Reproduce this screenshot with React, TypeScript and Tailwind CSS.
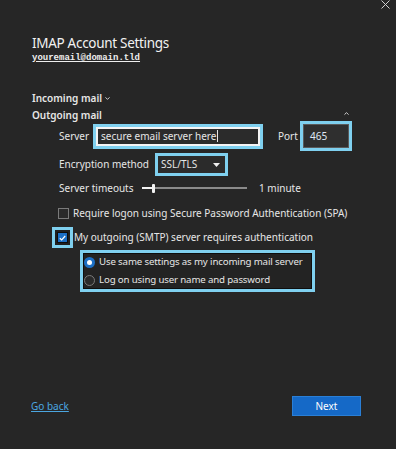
import { ChevronDown, ChevronUp } from "lucide-react";

const HL = "border-[3px] border-[#7fd0ef]";

export default function App() {
  return (
    <div className="relative flex flex-col w-[396px] h-[449px] bg-[#262626] text-[#e6e6e6] font-['Noto_Sans',sans-serif] text-[10px] overflow-hidden">
      {/* close */}
      <svg className="absolute right-[6px] top-[0px]" width="9" height="9" viewBox="0 0 9 9">
        <path d="M0.5 0.5 L8.5 8.5 M8.5 0.5 L0.5 8.5" stroke="#cfcfcf" strokeWidth="1" />
      </svg>

      {/* header */}
      <div className="pl-[32px] pt-[34px]">
        <h1 className="text-[13.5px] leading-[18px] tracking-[-0.3px] text-[#f2f2f2]">IMAP Account Settings</h1>
        <div className="font-['Liberation_Mono',monospace] font-bold text-[9px] leading-[12px] underline text-[#eeeeee]">
          youremail@domain.tld
        </div>
      </div>

      {/* section toggles */}
      <div className="mt-[27px] pl-[32px] flex items-center gap-[2px] h-[14px] font-semibold text-[10px]">
        Incoming mail
        <ChevronDown size={7} strokeWidth={3} />
      </div>
      <div className="mt-[4px] pl-[32px] pr-[46px] flex items-center justify-between h-[12px] font-semibold text-[10px]">
        <span>Outgoing mail</span>
        <ChevronUp size={7} strokeWidth={3} className="-mt-[4px]" />
      </div>

      {/* server + port */}
      <div className="pl-[59px] flex items-center h-[30px]">
        <span className="w-[34px]">Server</span>
        <div className={`${HL} w-[170px] h-[25px]`}>
          <div className="h-full border-2 border-[#f4f4f4] bg-[#2b2b2b] flex items-center pl-[3px]">
            <span>secure email server here</span>
            <span className="ml-[1px] w-[1px] h-[12px] bg-[#e6e6e6]" />
          </div>
        </div>
        <span className="ml-[15px] w-[22px]">Port</span>
        <div className={`${HL} w-[52px] h-[30px]`}>
          <div className="h-full border border-[#5a5a5a] bg-[#2f2f2f] flex items-center pl-[6px] text-[#dfe7f5]">
            465
          </div>
        </div>
      </div>

      {/* encryption */}
      <div className="mt-[2px] pl-[59px] flex items-center h-[23px]">
        <span className="w-[96px]">Encryption method</span>
        <div className={`${HL} w-[73px] h-[23px]`}>
          <div className="h-full bg-[#2b2b2b] flex items-center justify-between pl-[3px] pr-[5px]">
            <span>SSL/TLS</span>
            <svg width="7" height="4" viewBox="0 0 7 4">
              <path d="M0 0 H7 L3.5 4 Z" fill="#f0f0f0" />
            </svg>
          </div>
        </div>
      </div>

      {/* timeouts */}
      <div className="mt-[5px] pl-[59px] flex items-center h-[14px]">
        <span className="w-[83px]">Server timeouts</span>
        <div className="relative w-[105px] h-[10px] flex items-center">
          <div className="w-[10px] h-[2px] bg-[#f2f2f2]" />
          <div className="w-[3px] h-[9px] bg-[#f2f2f2] rounded-[1px]" />
          <div className="flex-1 h-[2px] bg-[#8a8a8a]" />
        </div>
        <span className="ml-[12px]">1 minute</span>
      </div>

      {/* SPA */}
      <div className="mt-[11px] pl-[58px] flex items-center h-[14px] gap-[4px]">
        <div className="w-[11px] h-[11px] border border-[#7a7a7a] bg-[#2a2a2a]" />
        <span>Require logon using Secure Password Authentication (SPA)</span>
      </div>

      {/* SMTP auth */}
      <div className="mt-[7px] pl-[52px] flex items-center h-[21px]">
        <div className={`${HL} w-[21px] h-[21px] flex items-center justify-center bg-[#1f1f1f]`}>
          <div className="w-[11px] h-[11px] bg-[#1c6fc5] border border-[#0d0d0d] flex items-center justify-center">
            <svg width="7" height="6" viewBox="0 0 7 6">
              <path d="M0.8 3.2 L2.7 5 L6.2 1" stroke="#ffffff" strokeWidth="1.2" fill="none" />
            </svg>
          </div>
        </div>
        <span className="ml-[1px]">My outgoing (SMTP) server requires authentication</span>
      </div>

      {/* radio group */}
      <div className={`mt-[2px] ml-[80px] w-[235px] h-[42px] ${HL}`}>
        <div className="h-full border border-[#0e0e0e] bg-[#232323] flex flex-col justify-center gap-[6px]">
          <div className="flex items-center gap-[4px] h-[12px] whitespace-nowrap">
            <div className="w-[11px] h-[11px] rounded-full bg-[#1c6fc5] flex items-center justify-center shrink-0">
              <div className="w-[5px] h-[5px] rounded-full bg-white" />
            </div>
            <span className="text-[9.7px] tracking-[-0.15px]">Use same settings as my incoming mail server</span>
          </div>
          <div className="flex items-center gap-[4px] h-[12px] whitespace-nowrap">
            <div className="w-[11px] h-[11px] rounded-full border border-[#7a7a7a] bg-[#2a2a2a] shrink-0" />
            <span className="text-[9.7px] tracking-[-0.15px]">Log on using user name and password</span>
          </div>
        </div>
      </div>

      {/* footer */}
      <div className="mt-auto mb-[33px] pl-[31px] pr-[35px] flex items-center justify-between h-[20px]">
        <a className="underline text-[#4ba6e0] text-[10px]">Go back</a>
        <button className="w-[69px] h-[20px] bg-[#1569c7] border border-[#2a7fd6] text-white text-[10px]">
          Next
        </button>
      </div>
    </div>
  );
}
